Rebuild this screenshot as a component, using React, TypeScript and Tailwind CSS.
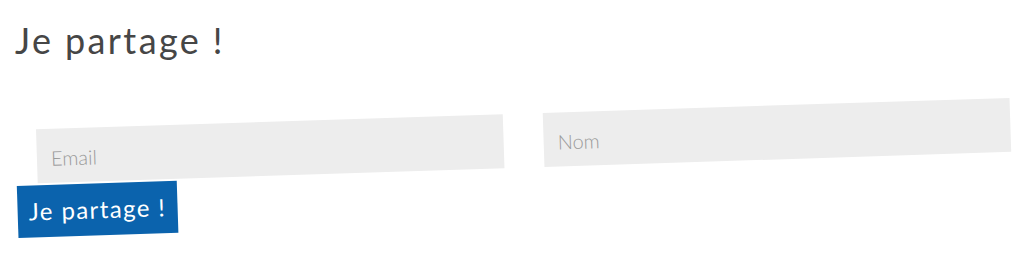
export default function App() {
  return (
    <div className="h-[265px] w-[1024px] overflow-hidden bg-white pl-[15px] pt-[22px]" style={{ fontFamily: 'Lato, "Noto Sans", sans-serif' }}>
      <h2 className="text-[36px] leading-none font-normal tracking-[2.4px] text-[#464646]">Je partage !</h2>

      <form
        className="mt-[72px] flex w-fit origin-top-left -rotate-[1.85deg] flex-col"
        onSubmit={(e) => e.preventDefault()}
      >
        <div className="flex gap-10 pl-[21px]">
          <input
            type="email"
            placeholder="Email"
            className="h-[54px] w-[467px] bg-[#ededed] px-[14px] pt-[4px] text-[20px] font-light text-[#555] outline-none placeholder:text-[#9b9b9b]"
          />
          <input
            type="text"
            placeholder="Nom"
            className="h-[54px] w-[467px] bg-[#ededed] px-[14px] pt-[4px] text-[20px] font-light text-[#555] outline-none placeholder:text-[#9b9b9b]"
          />
        </div>
        <button
          type="submit"
          className="mt-[2px] flex h-[52px] w-[160px] items-center bg-[#0b63ad] px-[11px] text-[24px] tracking-[1.4px] text-white"
        >
          Je partage !
        </button>
      </form>
    </div>
  );
}
